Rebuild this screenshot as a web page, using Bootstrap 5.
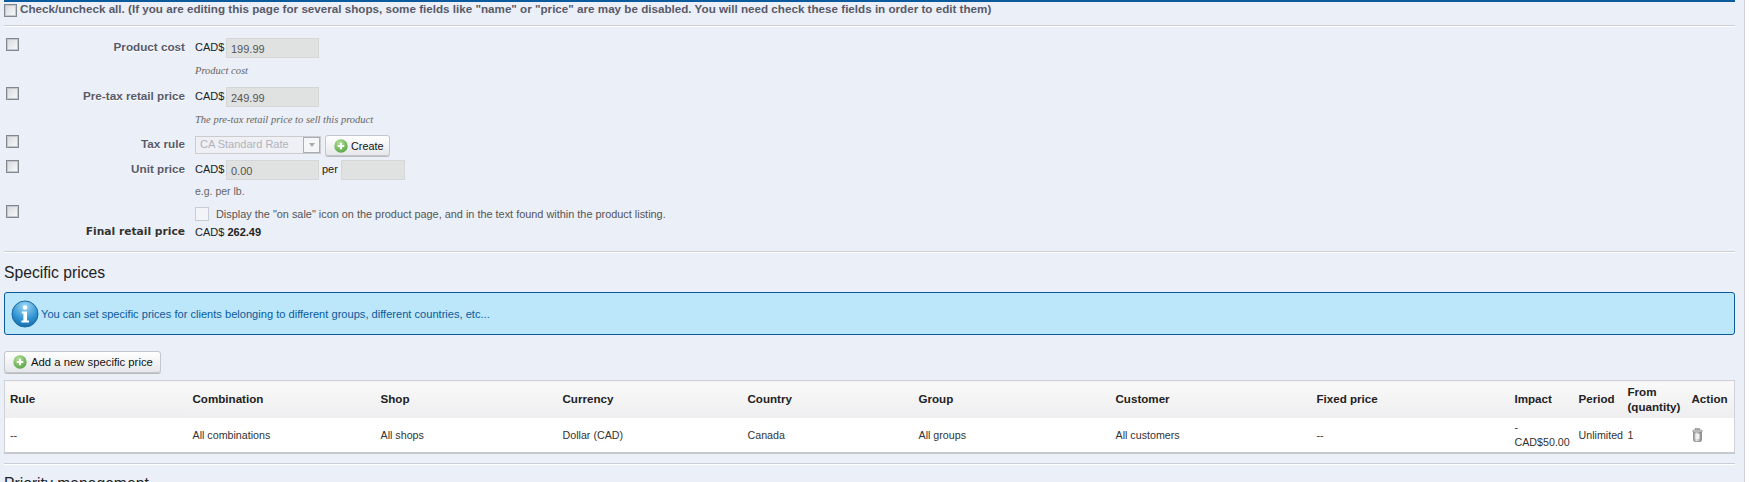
<!DOCTYPE html>
<html lang="en">
<head>
<meta charset="utf-8">
<title>Prices</title>
<link href="https://cdn.jsdelivr.net/npm/bootstrap@5.3.0/dist/css/bootstrap.min.css" rel="stylesheet">
<style>
html,body{height:482px;overflow:hidden}
body{background:#fff;font-family:"Liberation Sans",Arial,sans-serif;font-size:11px;color:#333;line-height:14px}
.pg{width:1745px;height:482px;padding:0 9px 0 4px;background:#ebeff7;border-right:1px solid #cdd0d6}
.topline{height:2px;background:#0a5a9c}
.allrow{height:23px;color:#585a69;font-weight:700;font-size:11.65px;gap:3px}
.allrow .cb{margin-top:2px}
.sep{border:0;border-top:1px solid #ccced7;border-bottom:1px solid #fff;opacity:1;margin:0;height:2px}
.cb{appearance:none;width:13px;height:13px;border:1px solid #80878f;box-shadow:inset 0 0 0 1px #c3c7cd;background:linear-gradient(135deg,#d5d8dc,#fbfbfc);flex:none;display:block;margin:0}
.frow{display:flex}
.cbcol{width:23px;flex:none;padding-left:2px}
.lbl{width:168px;flex:none;text-align:right;font-weight:700;font-size:11.7px;color:#585a69;padding-right:10px;padding-top:2px;text-shadow:0 1px 0 #fff}
.final{font-family:"DejaVu Sans",sans-serif;font-size:10.7px;color:#333;padding-top:0}
.inp{background:#e0e1e1;border:1px solid #d4d6d8;height:20px;padding:3px 4px;font-size:11px;color:#555;line-height:14px}
.w93{width:93px}.w64{width:64px}
.cur{color:#222;width:31px;flex:none;padding-top:2px}
.per{color:#222;padding:2px 3px 0}
.hint{font-family:"Liberation Serif",serif;font-style:italic;font-size:10.5px;color:#666;height:14px;margin-top:6px}
.eg{font-size:10.5px;color:#666;margin-top:4px}
.sel{width:126px;height:18px;margin-top:1px;border:1px solid #ccc;background:#eef0f5;color:#b0b3bb;font-size:11px;padding:0 0 0 4px;line-height:15px}
.arrow{width:17px;height:16px;outline:1px solid #a9aeb6;outline-offset:-1px;background:#f5f6f8;display:flex;align-items:center;justify-content:center;flex:none}
.arrow i{border:3.5px solid transparent;border-top:4px solid #aaa;border-bottom:0;display:block}
.pbtn{background:linear-gradient(#fff,#e6e7ea);border:1px solid #c3c6cc;border-radius:3px;color:#111;font-size:10.8px;padding:0 7px 0 8px;display:flex;align-items:center;gap:3px;line-height:14px;box-shadow:0 1px 0 #bbb}
.addb{height:22px;margin-top:16px;font-size:11.3px;padding:0 7px 0 8px;gap:4px}
.crt{height:21px;padding-right:6px}
.smcb{width:14px;height:14px;border:1px solid #c8ccd4;background:#f2f4f8;flex:none}
.hd{font-size:15.7px;font-weight:400;color:#222;margin:0;line-height:20px}
.note{height:43px;background:#bce6f9;border:1px solid #0b5a9c;border-radius:3px;color:#0b5a9c;font-size:11.1px;padding:0 6px;gap:2px}
.pbox{border:1px solid #cfd2d8;border-bottom:2px solid #c6c9cf;background:#fff;width:100%;table-layout:fixed;margin:0;font-size:10.7px;color:#333}
.pbox th{background:linear-gradient(#f9f9f9,#eeeef0);font-weight:700;font-size:11.6px;color:#222;height:37px;padding:0 0 1px 5px;vertical-align:middle;line-height:15px;border:0}
.pbox td{height:35px;padding:1px 0 0 5px;vertical-align:middle;border:0;color:#333;background:#fff;line-height:15px}
</style>
</head>
<body>
<div class="pg">
  <div class="topline"></div>
  <div class="d-flex align-items-start allrow"><input type="checkbox" class="cb"><span class="text-nowrap">Check/uncheck all. (If you are editing this page for several shops, some fields like "name" or "price" are may be disabled. You will need check these fields in order to edit them)</span></div>
  <div class="sep"></div>

  <div class="frow" style="margin-top:11px">
    <div class="cbcol"><input type="checkbox" class="cb"></div>
    <div class="lbl">Product cost</div>
    <div><div class="d-flex"><span class="cur">CAD$</span><div class="inp w93">199.99</div></div><div class="hint">Product cost</div></div>
  </div>
  <div class="frow" style="margin-top:9px">
    <div class="cbcol"><input type="checkbox" class="cb"></div>
    <div class="lbl">Pre-tax retail price</div>
    <div><div class="d-flex"><span class="cur">CAD$</span><div class="inp w93">249.99</div></div><div class="hint">The pre-tax retail price to sell this product</div></div>
  </div>
  <div class="frow" style="margin-top:8px">
    <div class="cbcol"><input type="checkbox" class="cb"></div>
    <div class="lbl">Tax rule</div>
    <div class="d-flex align-items-start" style="gap:4px"><div class="sel d-flex justify-content-between"><span>CA Standard Rate</span><span class="arrow"><i></i></span></div>
      <button type="button" class="pbtn crt"><svg width="14" height="14" viewBox="0 0 13 13"><defs><radialGradient id="g1" cx=".4" cy=".3" r=".8"><stop offset="0" stop-color="#b6e29a"/><stop offset="1" stop-color="#4f9f3f"/></radialGradient></defs><circle cx="6.500" cy="6.500" r="6.200" fill="url(#g1)"/><path d="M6.500 3.500v6M3.500 6.500h6" stroke="#fff" stroke-width="1.800"/></svg>Create</button></div>
  </div>
  <div class="frow" style="margin-top:4px">
    <div class="cbcol"><input type="checkbox" class="cb"></div>
    <div class="lbl">Unit price</div>
    <div><div class="d-flex"><span class="cur">CAD$</span><div class="inp w93">0.00</div><span class="per">per</span><div class="inp w64"></div></div><div class="eg">e.g. per lb.</div></div>
  </div>
  <div class="frow" style="margin-top:7px">
    <div class="cbcol"><input type="checkbox" class="cb"></div>
    <div class="lbl p-0"></div>
    <div class="d-flex align-items-center" style="gap:7px;margin-top:2px"><span class="smcb"></span><span style="color:#555;font-size:10.9px">Display the "on sale" icon on the product page, and in the text found within the product listing.</span></div>
  </div>
  <div class="frow" style="margin-top:4px">
    <div class="cbcol"></div>
    <div class="lbl final">Final retail price</div>
    <div style="color:#222">CAD$ <b>262.49</b></div>
  </div>
  <div class="sep" style="margin-top:12px"></div>
  <h4 class="hd" style="margin-top:10px">Specific prices</h4>
  <div class="note d-flex align-items-center" style="margin-top:9px">
    <svg width="28" height="28" viewBox="0 0 28 28"><defs><radialGradient id="g2" cx=".5" cy=".2" r=".9"><stop offset="0" stop-color="#9fd8f5"/><stop offset=".6" stop-color="#2d90d0"/><stop offset="1" stop-color="#0f5f9f"/></radialGradient></defs><circle cx="14" cy="14" r="13" fill="url(#g2)" stroke="#17699f" stroke-width="1"/><circle cx="14" cy="7.500" r="2.300" fill="#fff"/><path d="M10.800 11.500h5.200v9h2v2h-7.600v-2h2v-7h-1.600z" fill="#fff"/></svg>
    <span>You can set specific prices for clients belonging to different groups, different countries, etc...</span>
  </div>
  <button type="button" class="pbtn addb"><svg width="14" height="14" viewBox="0 0 13 13"><circle cx="6.500" cy="6.500" r="6.200" fill="url(#g1)"/><path d="M6.500 3.500v6M3.500 6.500h6" stroke="#fff" stroke-width="1.800"/></svg>Add a new specific price</button>
  <div style="margin-top:7px">
  <table class="table pbox">
    <colgroup><col style="width:183px"><col style="width:188px"><col style="width:182px"><col style="width:185px"><col style="width:171px"><col style="width:197px"><col style="width:201px"><col style="width:198px"><col style="width:64px"><col style="width:49px"><col style="width:64px"><col></colgroup>
    <thead><tr><th>Rule</th><th>Combination</th><th>Shop</th><th>Currency</th><th>Country</th><th>Group</th><th>Customer</th><th>Fixed price</th><th>Impact</th><th>Period</th><th>From (quantity)</th><th>Action</th></tr></thead>
    <tbody><tr><td>--</td><td>All combinations</td><td>All shops</td><td>Dollar (CAD)</td><td>Canada</td><td>All groups</td><td>All customers</td><td>--</td><td>-<br>CAD$50.00</td><td>Unlimited</td><td>1</td><td><svg width="11" height="14" viewBox="0 0 11 14" class="d-block"><defs><linearGradient id="g3"><stop offset="0" stop-color="#8f9193"/><stop offset=".4" stop-color="#e4e5e6"/><stop offset="1" stop-color="#7f8183"/></linearGradient></defs><rect x="3.500" y=".5" width="4" height="1.500" fill="#ccc" stroke="#888" stroke-width=".6"/><path d="M1.500 3.500h8v8.500q0 1.500-1.500 1.500H3q-1.500 0-1.500-1.500z" fill="url(#g3)" stroke="#777" stroke-width=".6"/><rect x=".8" y="2" width="9.400" height="2" rx=".8" fill="#d5d6d7" stroke="#777" stroke-width=".6"/><rect x="3.500" y="6" width="4" height="5" fill="#f1f1f1"/></svg></td></tr></tbody>
  </table>
  </div>
  <div class="sep" style="margin-top:9px"></div>
  <h4 class="hd" style="margin-top:9px">Priority management</h4>
</div>
</body>
</html>
